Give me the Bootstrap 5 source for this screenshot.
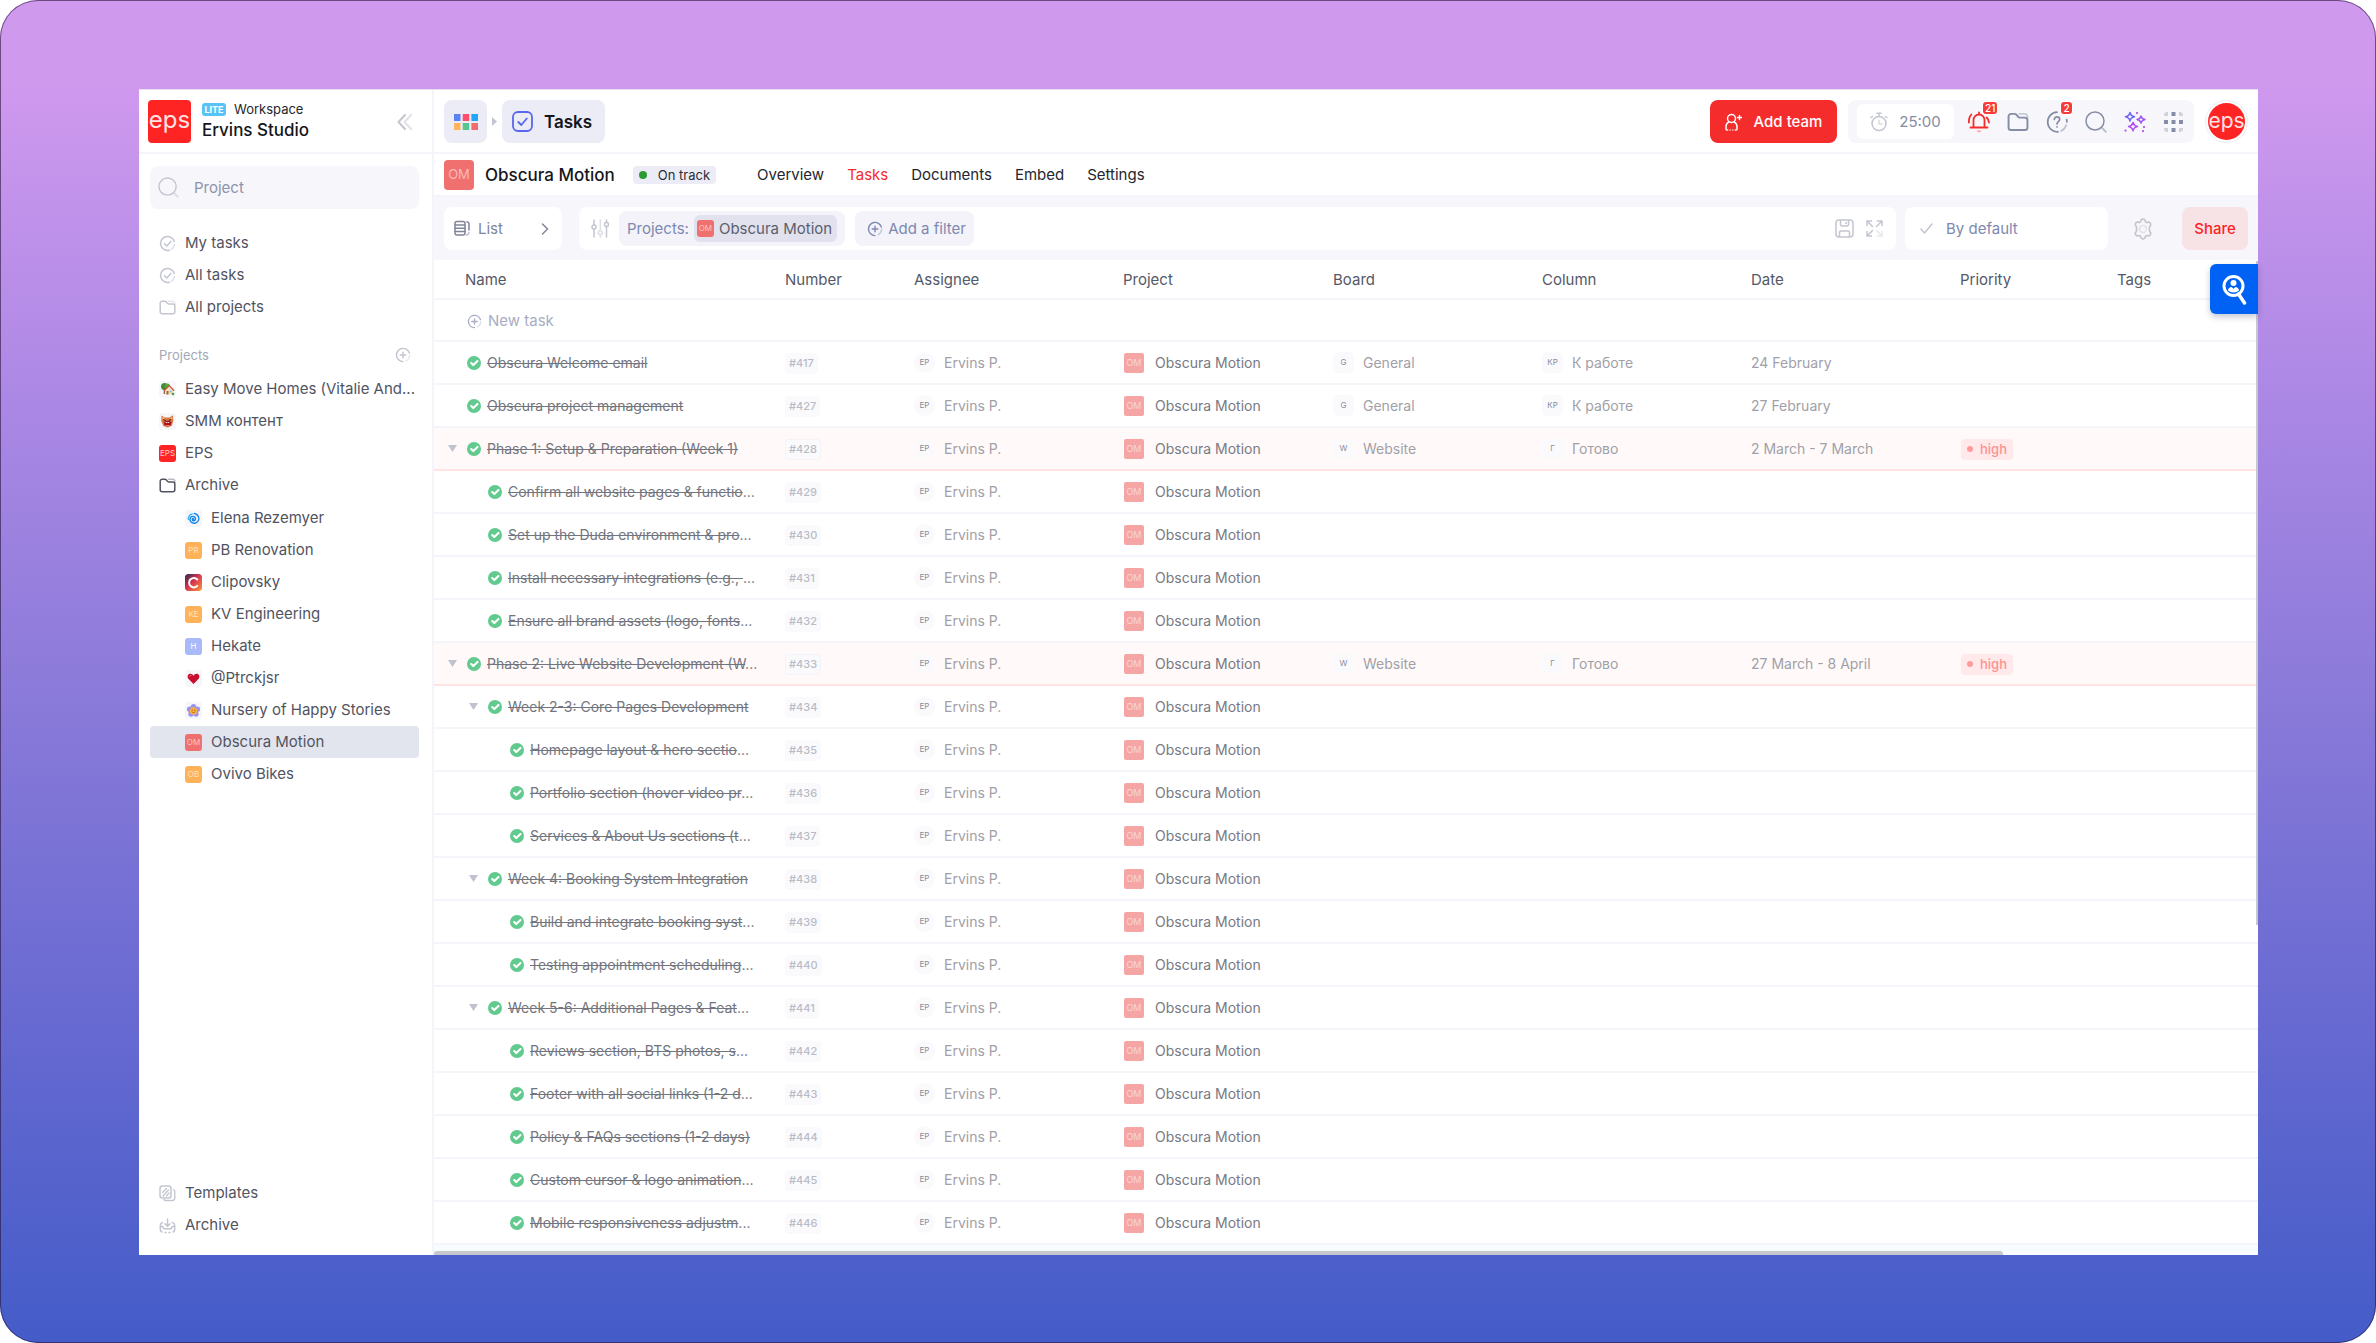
<!DOCTYPE html>
<html lang="en">
<head>
<meta charset="utf-8">
<meta name="viewport" content="width=device-width, initial-scale=1">
<title>Obscura Motion – Tasks</title>
<link href="https://cdn.jsdelivr.net/npm/bootstrap@5.3.0/dist/css/bootstrap.min.css" rel="stylesheet">
<style>
  :root { --line: #f4f5fa; --soft: #f7f7fb; --chip: #ebecf5; --ink: #15161c; --txt: #51545f; --mute: #8d93ab; --slate: #7d89b0; --red: #f52c2c; }
  body { font-family: Inter, "Liberation Sans", sans-serif; font-size: 15px; line-height: 20px; color: var(--txt); background: #fff; }
  a { color: inherit; text-decoration: none; }
  svg { display: block; flex: none; fill: none; stroke: currentColor; stroke-width: 1.5; stroke-linecap: round; stroke-linejoin: round; }
  button { font: inherit; color: inherit; border: 0; background: none; padding: 0; white-space: nowrap; }
  .frame { min-height: 100vh; padding: 89px 118px 88px 139px; border-radius: 38px; box-shadow: inset 0 0 0 1px rgba(40, 20, 60, .6); background: linear-gradient(180deg, #cf99ee 6%, #a886e4 32%, #8a7ad9 52%, #6669d1 77%, #445cc8 100%); }
  .app { background: #fff; border-top: 1px solid #e6e2ef; }
  .topline { height: 64px; padding-top: 1px; border-bottom: 2px solid var(--line); }

  /* sidebar */
  .side { width: 295px; border-right: 2px solid var(--line); }
  .brand { padding-left: 9px; gap: 11px; }
  .eps { background: #ff2424; color: #ffe3e3; line-height: 1; overflow: hidden; }
  .eps-sq { width: 43px; height: 43px; border-radius: 4px; font-size: 24px; padding-bottom: 4px; }
  .eps-av { width: 37px; height: 37px; border-radius: 50%; font-size: 21px; padding-bottom: 3px; }
  .ring { padding: 2px; border: 1px solid #ebecf2; border-radius: 50%; }
  .lite { width: 24px; height: 13px; border-radius: 3px; background: #58c3f6; color: #fff; font-size: 9px; line-height: 13px; font-weight: 700; text-align: center; }
  .ws-small { font-size: 13px; line-height: 17px; color: #25262d; }
  .ws-big { font-size: 17px; line-height: 24px; font-weight: 500; color: var(--ink); }
  .side-body { padding: 12px 13px 14px 11px; }
  .find { height: 43px; border-radius: 8px; background: var(--soft); color: #c3c5cf; padding: 0 8px; gap: 13px; }
  .find input { border: 0; background: none; outline: 0; min-width: 0; color: var(--mute); }
  .find input::placeholder { color: var(--mute); opacity: 1; }
  .nav-main { margin-top: 18px; }
  .nav-proj { margin-top: 2px; }
  .lnk { height: 32px; padding-left: 9px; gap: 9px; border-radius: 4px; white-space: nowrap; }
  .lnk svg.ln { color: #c3c5cf; }
  .lnk.active { background: #e3e5ee; }
  .sub { margin-top: 1px; }
  .sub .lnk { padding-left: 35px; }
  .grp { height: 32px; margin-top: 16px; padding: 0 8px 0 9px; font-size: 13px; color: #a3a7b8; }
  .tile { width: 17px; height: 17px; border-radius: 3px; flex: none; font-size: 8px; line-height: 17px; text-align: center; color: #ffdcc0; background: #f6f6fb; overflow: hidden; }
  .tile svg { width: 17px; height: 17px; stroke: none; }
  .t-org { background: #ffb257; color: #ffe2bd; }
  .t-red { background: #f07070; color: #fcc3c3; }
  .t-eps { background: #ff2424; color: #ffc9c9; }
  .t-blu { background: #a9baf9; color: #fff; }

  /* top bar */
  .bar { padding-left: 10px; padding-right: 10px; }
  .soft-btn { height: 43px; border-radius: 8px; background: var(--chip); color: var(--ink); }
  .soft-btn.sq { width: 43px; }
  .soft-btn.wide { padding: 0 13px 0 10px; gap: 11px; font-size: 17px; font-weight: 600; }
  .sep { width: 15px; color: #c3c5d2; }
  .add-team { height: 43px; width: 127px; gap: 12px; border-radius: 8px; background: var(--red); color: #fff; font-weight: 500; margin-right: 11px; }
  .tools { height: 43px; padding: 0 1px 0 9px; border-radius: 8px; background: var(--soft); margin-right: 11px; color: #858ca6; }
  .timer { height: 35px; width: 97px; border-radius: 6px; background: #fff; margin-right: 5px; gap: 11px; }
  .tool { width: 39px; height: 43px; }
  .pin { position: absolute; top: 2px; left: 24px; min-width: 11px; height: 12px; padding: 0 2px; border-radius: 3px; background: #f73b3b; box-shadow: 0 0 0 1px #fff; color: #fff; font-size: 10px; line-height: 12px; font-weight: 500; }

  /* project bar */
  .proj { height: 43px; border-bottom: 2px solid var(--line); }
  .om { width: 30px; height: 30px; border-radius: 4px; background: #f07070; color: #fbb9b9; font-size: 13px; line-height: 29px; text-align: center; }
  .proj-name { font-size: 17px; font-weight: 500; color: var(--ink); margin: 0 18px 0 11px; line-height: 24px; }
  .track { height: 18px; padding: 0 6px; gap: 11px; border-radius: 4px; background: var(--chip); font-size: 13px; line-height: 18px; color: #2b2d36; }
  .track i { width: 8px; height: 8px; border-radius: 50%; background: #2c9b33; }
  .tabs { margin-left: 41px; gap: 23px; color: #25262d; }
  .tabs .active { color: #f52c2c; }

  /* filter bar */
  .filters { padding: 10px; background: var(--soft); }
  .box { height: 43px; border-radius: 8px; background: #fff; }
  .view { width: 118px; padding: 0 13px 0 10px; margin-right: 17px; color: #80859a; }
  .fbox { padding: 0 13px 0 12px; margin-right: 9px; }
  .pill { height: 35px; padding: 0 8px; border-radius: 8px; background: #f3f3f9; color: var(--slate); margin-left: 10px; gap: 5px; }
  .pill-in { height: 27px; border-radius: 6px; background: #e1e2ee; color: #5b5e6c; padding: 0 5px 0 3px; gap: 5px; }
  .sort { width: 203px; padding-left: 15px; gap: 13px; color: var(--slate); }
  .faint { color: #c3c5cf; }
  .gear { margin: 0 28px 0 24px; }
  .share { width: 66px; height: 43px; border-radius: 8px; background: #f7e2e5; color: #ff1f1f; font-weight: 500; }

  /* task table */
  .tasks { table-layout: fixed; border-collapse: separate; border-spacing: 0; margin: 0; font-size: 14px; width: 100%; }
  .tasks th { height: 40px; padding: 2px 0 0; font-size: 15px; font-weight: 400; color: #555866; border-bottom: 2px solid var(--line); vertical-align: middle; }
  .tasks th:first-child { padding-left: 31px; }
  .tasks td { height: 43px; padding: 0; border-bottom: 2px solid var(--line); color: #9fa0a8; white-space: nowrap; vertical-align: middle; }
  .tasks .new td { height: 42px; padding: 2px 0 0 33px; color: #a7adc3; }
  .new button { font-size: 15px; gap: 6px; }
  .tasks .hot td { background: #fffaf9; border-bottom-color: #ffe2e1; }
  .c-name { width: 351px; } .c-num { width: 129px; } .c-mid { width: 209px; } .c-proj { width: 210px; } .c-pri { width: 157px; }
  .nm { padding-left: 14px; gap: 6px; color: #73757e; }
  .l1 { padding-left: 35px; } .l2 { padding-left: 57px; }
  .tog { width: 13px; color: #c0c3cf; }
  .tog svg { width: 9px; fill: currentColor; stroke: none; }
  .done.form-check-input { width: 14px; height: 14px; margin: 0; border: 0; border-radius: 50%; background-color: #62ca8e; flex: none; }
  .no { display: inline-block; height: 21px; padding: 0 4px; border-radius: 4px; background: #fafafd; font-size: 11px; line-height: 20px; font-weight: 500; color: #b9bbc6; }
  .hot .no { box-shadow: inset 0 0 0 1px #f4f3f8; }
  .av { width: 21px; height: 21px; border-radius: 5px; background: #fafafd; font-size: 8px; line-height: 21px; text-align: center; color: #8a8c96; margin-right: 9px; }
  .av.rd { border-radius: 50%; }
  .pj { width: 20px; height: 20px; margin: 0 11px 0 1px; border-radius: 2px; background: #f6a5a5; font-size: 9px; line-height: 20px; text-align: center; color: #fbd5d5; }
  .pj-name { color: #777983; }
  .hi { display: inline-flex; align-items: center; height: 21px; padding: 0 6px; gap: 7px; margin-left: 1px; border-radius: 4px; background: #ffe9ea; color: #ff9191; font-size: 13px; font-weight: 500; }
  .hi i { width: 6px; height: 6px; border-radius: 50%; background: #ff9a9a; }
  .hscroll { height: 10px; background: #f8fbff; }
  .hscroll div { width: 86%; height: 4px; border-radius: 3px 3px 0 0; background: #c6c8d0; }
  .vscroll { position: absolute; right: 0; top: 171px; width: 2px; height: 57%; background: #c6c8d0; }
  .float { position: absolute; right: 0; top: 174px; width: 48px; height: 50px; border-radius: 6px 0 0 6px; background: #0062f5; color: #fff; box-shadow: 0 3px 6px rgba(30, 40, 80, .25); }
</style>
<script src="https://cdn.jsdelivr.net/npm/bootstrap@5.3.0/dist/js/bootstrap.bundle.min.js"></script>
</head>
<body>
<svg class="d-none" aria-hidden="true">
  <symbol id="i-done" viewBox="0 0 17 17"><path d="M15.3 6.5A7 7 0 1 0 10.5 15.2"/><path d="M15.6 9.5A7 7 0 0 1 12.5 14.2" opacity=".5"/><path d="M5.5 8.8l2.2 2.2 4.2-4.6"/></symbol>
  <symbol id="i-folder" viewBox="0 0 17 17"><path d="M1.2 4.2a2 2 0 0 1 2-2h2.6c.6 0 1.1.3 1.5.7l1.2 1.5c.4.5.9.7 1.5.7h3.8a2 2 0 0 1 2 2v5.600a2 2 0 0 1-2 2H3.200a2 2 0 0 1-2-2z"/><path d="M9.500 2.200h4.300a2 2 0 0 1 2 2v1.200" opacity=".4"/></symbol>
  <symbol id="i-plus" viewBox="0 0 17 17"><path d="M15.300 6.500A7 7 0 1 0 8.500 15.500"/><path d="M15.500 9a7 7 0 0 1-3.700 5.700" opacity=".4"/><path d="M8.500 5.500v6M5.500 8.500h6"/></symbol>
  <symbol id="i-search" viewBox="0 0 22 22"><circle cx="10" cy="10" r="9"/><path d="M17.500 17.500l3.300 3.300" opacity=".5" stroke-width="2"/></symbol>
</svg>

<div class="frame d-flex">
<div class="app position-relative d-flex flex-grow-1">

  <aside class="side d-flex flex-column flex-shrink-0">
    <div class="topline brand d-flex align-items-center pe-3">
      <div class="eps eps-sq d-flex align-items-center justify-content-center">eps</div>
      <div>
        <div class="d-flex align-items-center gap-2"><span class="lite">LITE</span><span class="ws-small">Workspace</span></div>
        <div class="ws-big">Ervins Studio</div>
      </div>
      <button class="ms-auto me-1" aria-label="Collapse sidebar"><svg class="faint" width="15" height="18" viewBox="0 0 15 18" stroke-width="2"><path d="M8 2L1.500 9 8 16" stroke-width="2"/><path d="M14 2L7.500 9l6.500 7" opacity=".5" stroke-width="2"/></svg></button>
    </div>
    <div class="side-body d-flex flex-column flex-grow-1">
      <label class="find d-flex align-items-center"><svg width="21" height="21"><use href="#i-search"/></svg><input type="text" placeholder="Project" aria-label="Project"></label>
      <ul class="nav-main list-unstyled mb-0">
        <li><a href="#" class="lnk d-flex align-items-center"><svg class="ln" width="17" height="17"><use href="#i-done"/></svg>My tasks</a></li>
        <li><a href="#" class="lnk d-flex align-items-center"><svg class="ln" width="17" height="17"><use href="#i-done"/></svg>All tasks</a></li>
        <li><a href="#" class="lnk d-flex align-items-center"><svg class="ln" width="17" height="17"><use href="#i-folder"/></svg>All projects</a></li>
      </ul>
      <div class="grp d-flex align-items-center justify-content-between">Projects<button class="faint" aria-label="Add project"><svg width="16" height="16"><use href="#i-plus"/></svg></button></div>
      <ul class="nav-proj list-unstyled mb-0">
        <li><a href="#" class="lnk d-flex align-items-center"><span class="tile"><svg viewBox="0 0 17 17"><circle cx="5.500" cy="5.500" r="3.500" fill="#3f8f35"/><circle cx="8.500" cy="5" r="2.500" fill="#56a843"/><path d="M4.700 7.500h1.200V13H4.700z" fill="#8a5a34"/><path d="M6 9l4.300-4 4.200 4v4.500H6z" fill="#f5e2c2"/><path d="M5.500 9.200l4.700-4.600 4.500 4.600" stroke="#c5553c" stroke-width="1.300" fill="none"/><path d="M7.500 10h2v3.500h-2z" fill="#a0653b"/><path d="M10.800 9.700h1.700v1.700h-1.700z" fill="#6cb7e8"/><circle cx="14" cy="13" r="1.300" fill="#4aa03f"/></svg></span>Easy Move Homes (Vitalie And...</a></li>
        <li><a href="#" class="lnk d-flex align-items-center"><span class="tile"><svg viewBox="0 0 17 17"><path d="M2.500 2.500l3 2h5l3.500-2.300.3 5.500-1.500 5-4.200 1.800-4.300-1.500L2.300 8z" fill="#d9793f"/><path d="M3.500 4l2 1.500L3.700 7zM13.300 3.800l-2 1.700L13 7z" fill="#f8c9a0"/><path d="M5 9.500c1-2 6-2.400 7.300-.2l-.6 3-3.500 1-2.700-1z" fill="#a5121c"/><path d="M6.300 9l1 1 1-.8 1.200.8 1-1z" fill="#fff"/><path d="M4.500 6.800l2 .7M12 6.500l-2 .8" stroke="#4b1d12" stroke-width="1"/><path d="M7 12.500h3" stroke="#ff6b6b" stroke-width="1.200"/></svg></span>SMM контент</a></li>
        <li><a href="#" class="lnk d-flex align-items-center"><span class="tile t-eps">EPS</span>EPS</a></li>
        <li><a href="#" class="lnk d-flex align-items-center"><svg width="17" height="17"><use href="#i-folder"/></svg>Archive</a>
          <ul class="sub list-unstyled">
            <li><a href="#" class="lnk d-flex align-items-center"><span class="tile"><svg viewBox="0 0 17 17"><g fill="none" stroke-linecap="round"><path d="M8.600 9.200c.3-1-1.400-1-1.300.4.100 1.900 3.400 1.500 3.200-1-.3-3-5.300-3-5.500.6-.1 2.600 2 4.300 4.500 4 2.800-.4 4.600-2.700 4.300-5.200C13.500 5.500 11.500 4 9.200 3.500" stroke="#1585ea" stroke-width="1.400"/><path d="M3.300 9.500c-.1-3 1.700-5 4-5.600" stroke="#35b4f2" stroke-width="1.300"/></g></svg></span>Elena Rezemyer</a></li>
            <li><a href="#" class="lnk d-flex align-items-center"><span class="tile t-org">PR</span>PB Renovation</a></li>
            <li><a href="#" class="lnk d-flex align-items-center"><span class="tile"><svg viewBox="0 0 17 17"><defs><linearGradient id="gc" x1="0" y1="0" x2="1" y2="1"><stop offset="0" stop-color="#1f2b50"/><stop offset=".45" stop-color="#d8324f"/><stop offset="1" stop-color="#fb9a3c"/></linearGradient></defs><rect width="17" height="17" rx="3" fill="url(#gc)"/><path d="M12.300 5.500a4.700 4.700 0 1 0 0 6.400" fill="none" stroke="#fff" stroke-width="2"/></svg></span>Clipovsky</a></li>
            <li><a href="#" class="lnk d-flex align-items-center"><span class="tile t-org">KE</span>KV Engineering</a></li>
            <li><a href="#" class="lnk d-flex align-items-center"><span class="tile t-blu">H</span>Hekate</a></li>
            <li><a href="#" class="lnk d-flex align-items-center"><span class="tile"><svg viewBox="0 0 17 17"><path d="M8.500 14L3.300 8.700C1.700 6.500 3 3.800 5.300 3.800c1.400 0 2.600.9 3.200 2 .6-1.100 1.800-2 3.200-2 2.300 0 3.600 2.700 2 4.900z" fill="#c8102e"/><path d="M4.800 6.300c.2-.7.700-1 1.300-1" stroke="#ff7b8a" stroke-width="1" fill="none"/></svg></span>@Ptrckjsr</a></li>
            <li><a href="#" class="lnk d-flex align-items-center"><span class="tile"><svg viewBox="0 0 17 17"><g fill="#9a94f0"><circle cx="8.500" cy="4.600" r="2.700"/><circle cx="12.400" cy="7.300" r="2.700"/><circle cx="11" cy="12" r="2.700"/><circle cx="6" cy="12" r="2.700"/><circle cx="4.600" cy="7.300" r="2.700"/></g><circle cx="8.500" cy="8.900" r="3.600" fill="#fdb03f"/><path d="M7.200 7.700v.8M9.800 7.700v.8M7 10c.8.900 2.200.9 3 0" stroke="#a85a10" stroke-width=".8" fill="none"/></svg></span>Nursery of Happy Stories</a></li>
            <li><a href="#" class="lnk active d-flex align-items-center" aria-current="page"><span class="tile t-red">OM</span>Obscura Motion</a></li>
            <li><a href="#" class="lnk d-flex align-items-center"><span class="tile t-org">OB</span>Ovivo Bikes</a></li>
          </ul>
        </li>
      </ul>
      <ul class="list-unstyled mb-0 mt-auto">
        <li><a href="#" class="lnk d-flex align-items-center"><svg class="ln" width="17" height="17" viewBox="0 0 17 17"><rect x="1" y="1" width="11" height="12" rx="2.500"/><path d="M14.500 4.500c1 .4 1.300 1 1.300 2V13a2.500 2.500 0 0 1-2.500 2.500H7c-1 0-1.700-.3-2.200-1M3.500 7.500l4-4M4 11l5.500-6M7.500 11L10 8" stroke-width="1.300"/></svg>Templates</a></li>
        <li><a href="#" class="lnk d-flex align-items-center"><svg class="ln" width="17" height="17" viewBox="0 0 17 17"><path d="M8.500 2v7M6 6.700L8.500 9.200 11 6.700"/><path d="M3.500 5.500C2 6 1.300 7 1.300 8.500v4c0 1 .5 2 1.500 2.500M13.500 5.500c1.500.5 2.200 1.500 2.200 3v4c0 1-.5 2-1.500 2.500M1.500 9.500h2l1.500 2.300h7l1.500-2.300h2M6 15.500h1M10 15.500h1"/></svg>Archive</a></li>
      </ul>
    </div>
  </aside>

  <main class="d-flex flex-column flex-grow-1">
    <header class="topline bar d-flex align-items-center">
      <button class="soft-btn sq d-flex align-items-center justify-content-center" aria-label="Apps"><svg width="24" height="16" viewBox="0 0 24 16"><g stroke="none"><path fill="#5b82f2" d="M0 0h6.500v7H0z"/><path fill="#ff4d6d" d="M8.700 0h6.500v7H8.700z"/><path fill="#22a6f7" d="M17.400 0h6.600v7h-6.600z"/><path fill="#ffb55c" d="M0 9h6.500v7H0z"/><path fill="#5ac58f" d="M8.700 9h6.500v7H8.700z"/><path fill="#ee6e6e" d="M17.400 9h6.600v7h-6.600z"/></g></svg></button>
      <span class="sep d-flex justify-content-center"><svg width="5" height="9" viewBox="0 0 5 9"><path d="M0 0l5 4.500L0 9z" fill="currentColor" stroke="none"/></svg></span>
      <button class="soft-btn wide d-flex align-items-center"><svg width="21" height="21" viewBox="0 0 21 21" color="#5866f0"><g stroke-width="1.800"><rect x="1" y="1" width="19" height="19" rx="5"/><path d="M6.300 11l3 3 5.500-6.500"/></g></svg>Tasks</button>

      <button class="add-team d-flex align-items-center justify-content-center ms-auto"><svg width="17" height="18" viewBox="0 0 17 18"><circle cx="6.500" cy="5.500" r="4"/><path d="M3.800 8.800C2 9.800 1 11.500 1 13.500V16c0 .6.400 1 1 1h.7M9.200 8.800c1.800 1 2.800 2.700 2.800 4.700V16c0 .6-.4 1-1 1h-.7M14.500 2.500v4M12.500 4.500h4"/><path d="M5 17h.5M7.500 17H8" opacity=".6"/></svg>Add team</button>
      <div class="tools d-flex align-items-center">
        <button class="timer d-flex align-items-center justify-content-center"><svg class="faint" width="18" height="20" viewBox="0 0 18 20"><circle cx="9" cy="11.500" r="7"/><path d="M7 1.200h4M9 1.500V4M2.500 4.500L1 5.500M15.500 4.500l1.500 1"/><path d="M9 8.500v3.500h3" opacity=".6"/></svg>25:00</button>
        <button class="tool position-relative d-flex align-items-center justify-content-center" aria-label="Notifications"><svg width="22" height="22" viewBox="0 0 22 22" color="#f52c2c"><path stroke-width="1.800" d="M11 1.500v1.300M5.500 16.500V9a5.500 5.500 0 0 1 11 0v7.500M2.500 16.500h17M3.300 3.500A9 9 0 0 0 .9 9.500v2M18.700 6.500c1.300 1.300 2.200 3 2.300 5"/><path d="M8.500 19.500h5c-.5 1.200-1.400 1.800-2.500 1.800s-2-.6-2.500-1.800z" fill="#fba3a3" stroke="none"/></svg><span class="pin">21</span></button>
        <button class="tool d-flex align-items-center justify-content-center" aria-label="Files"><svg width="22" height="22"><use href="#i-folder"/></svg></button>
        <button class="tool position-relative d-flex align-items-center justify-content-center" aria-label="Help"><svg width="22" height="22" viewBox="0 0 22 22"><g stroke-width="1.700"><path d="M11 1.200a9.800 9.800 0 1 0 1 19.600"/><path d="M15 20a9.800 9.800 0 0 0 5.300-6" opacity=".5"/><path d="M20.700 8.500c.2.800.2 2 .1 2.500M8.300 8.500c0-1.700 1.200-2.700 2.700-2.700s2.700 1 2.700 2.500c0 2.200-2.700 2.300-2.700 4.700M11 15.800v.1"/></g></svg><span class="pin">2</span></button>
        <button class="tool d-flex align-items-center justify-content-center" aria-label="Search"><svg width="22" height="22"><use href="#i-search"/></svg></button>
        <button class="tool d-flex align-items-center justify-content-center" aria-label="AI assistant"><svg width="22" height="22" viewBox="0 0 22 22"><path color="#6a66f5" d="M6 1.500c.5 2.700 1.500 3.700 4.500 4.300-3 .6-4 1.600-4.500 4.300-.5-2.700-1.500-3.700-4.500-4.300 3-.6 4-1.600 4.500-4.300z"/><path color="#a457f0" d="M17 5c.5 2.200 1.400 3 4 3.500-2.600.5-3.500 1.300-4 3.500-.5-2.200-1.400-3-4-3.500 2.600-.5 3.500-1.300 4-3.500z"/><path color="#b14df0" d="M9 11.500c.6 2.600 1.600 3.500 4.500 4-2.900.6-3.900 1.500-4.500 4.300-.6-2.800-1.600-3.700-4.500-4.300 2.900-.5 3.900-1.400 4.500-4z"/><path d="M13 2v.1M1.500 19.500v.1M20 16v.1M19 20v.1" color="#b14df0" stroke-width="2.200"/></svg></button>
        <button class="tool d-flex align-items-center justify-content-center" aria-label="More apps"><svg width="19" height="20" viewBox="0 0 19 20"><g fill="currentColor" stroke="none"><path d="M7.500 0h4v4h-4zM0 8h4v4H0zM7.500 8h4v4h-4zM15 8h4v4h-4zM7.500 16h4v4h-4z"/><path opacity=".35" d="M2 0h2v4H0V2zM15 0h2l2 2v2h-4zM0 16h4v4H2l-2-2zM15 16h4v2l-2 2h-2z"/></g></svg></button>
      </div>
      <a href="#" class="ring" aria-label="Profile"><span class="eps eps-av d-flex align-items-center justify-content-center">eps</span></a>
    </header>

    <div class="proj bar d-flex align-items-center">
      <div class="om">OM</div>
      <h1 class="proj-name">Obscura Motion</h1>
      <span class="track d-flex align-items-center"><i></i>On track</span>
      <nav class="tabs d-flex"><a href="#">Overview</a><a href="#" class="active">Tasks</a><a href="#">Documents</a><a href="#">Embed</a><a href="#">Settings</a></nav>
    </div>

    <div class="filters d-flex align-items-center">
      <button class="box view d-flex align-items-center"><svg width="16" height="17" viewBox="0 0 16 17"><rect x="1" y="1.500" width="10" height="13.500" rx="2"/><path d="M1 5h10M1 8.300h10M1 11.600h10M13 1.800c1.500.3 2 1 2 2.200v6"/><path d="M15 12.500c-.2 1.700-1 2.400-2.500 2.500" opacity=".5"/></svg><span class="ms-2">List</span><svg class="ms-auto" width="8" height="12" viewBox="0 0 8 12"><path d="M1.500 1l5 5-5 5"/></svg></button>
      <div class="box fbox d-flex align-items-center flex-grow-1">
        <svg class="faint" width="18" height="19" viewBox="0 0 18 19"><path d="M3 1v5M3 10v8M15.500 1v2.500M15.500 7.500V18"/><circle cx="3" cy="8" r="2"/><circle cx="15.500" cy="5.500" r="2"/><g opacity=".55"><path d="M9.300 1v10.500M9.300 16v2"/><circle cx="9.300" cy="13.700" r="2"/></g></svg>
        <button class="pill d-flex align-items-center">Projects:<span class="pill-in d-flex align-items-center"><span class="tile t-red">OM</span>Obscura Motion</span></button>
        <button class="pill d-flex align-items-center"><svg class="ms-1" width="16" height="16"><use href="#i-plus"/></svg>Add a filter</button>
        <button class="faint ms-auto" aria-label="Save"><svg width="19" height="19" viewBox="0 0 19 19"><rect x="1" y="1" width="17" height="17" rx="3"/><path d="M5.500 1.500v4a1.500 1.500 0 0 0 1.500 1.500h5a1.500 1.500 0 0 0 1.500-1.500v-4M11 3.500v1M4.500 17.500v-4A1.500 1.500 0 0 1 6 12h7a1.500 1.500 0 0 1 1.500 1.500v4"/></svg></button>
        <button class="faint ms-2 ps-1" aria-label="Expand"><svg width="17" height="17" viewBox="0 0 17 17"><path d="M1 5.500V1h4.500M1.500 1.500l5 5M11.500 1H16v4.500M15.500 1.500l-5 5M1 11.500V16h4.500M1.500 15.500l5-5"/><path opacity=".4" d="M11.500 16H16v-4.500M15.500 15.500l-5-5"/></svg></button>
      </div>
      <button class="box sort d-flex align-items-center"><svg class="faint" width="13" height="11" viewBox="0 0 13 11"><path d="M1 6l3.500 4L12 1"/></svg>By default</button>
      <button class="faint gear" aria-label="Settings"><svg width="22" height="22" viewBox="0 0 22 22"><path stroke-width="1.700" d="M11 1.200c1.300 0 2 .5 2.200 1.600.2 1.200 1.500 1.900 2.700 1.400 1.100-.4 1.900 0 2.500 1.100s.6 2-.3 2.700c-1 .8-1 5.200 0 6 .9.700.9 1.600.3 2.700s-1.400 1.500-2.500 1.100c-1.200-.5-2.500.2-2.700 1.400-.2 1.100-.9 1.600-2.200 1.600s-2-.5-2.200-1.600c-.2-1.200-1.500-1.900-2.700-1.400-1.100.4-1.900 0-2.500-1.100s-.6-2 .3-2.700c1-.8 1-5.200 0-6-.9-.7-.9-1.600-.3-2.700s1.400-1.500 2.500-1.100c1.200.5 2.500-.2 2.700-1.400.2-1.100.9-1.600 2.200-1.600z"/><path d="M13 13.800A3.500 3.500 0 1 1 14.300 12" opacity=".45"/></svg></button>
      <button class="share">Share</button>
    </div>

    <table class="tasks">
      <colgroup><col class="c-name"><col class="c-num"><col class="c-mid"><col class="c-proj"><col class="c-mid"><col class="c-mid"><col class="c-mid"><col class="c-pri"><col></colgroup>
      <thead><tr><th>Name</th><th>Number</th><th>Assignee</th><th>Project</th><th>Board</th><th>Column</th><th>Date</th><th>Priority</th><th>Tags</th></tr></thead>
      <tbody id="rows">
        <tr class="new"><td colspan="9"><button class="d-flex align-items-center"><svg width="15" height="15"><use href="#i-plus"/></svg>New task</button></td></tr>
      </tbody>
    </table>
    <div class="hscroll mt-auto d-flex align-items-end"><div></div></div>
  </main>

  <div class="vscroll"></div>
  <button class="float d-flex align-items-center justify-content-center" aria-label="Find people"><svg width="25" height="31" viewBox="0 0 25 31"><circle cx="11.500" cy="12" r="9.500" stroke-width="3"/><path d="M16.500 20l6 9" stroke-width="3.500"/><g fill="#fff" stroke="none"><circle cx="11.500" cy="9" r="3"/><path d="M6 16.500c0-2 2-3.500 3.500-3.500l2 1.700 2-1.700c1.500 0 3.500 1.500 3.500 3.500-2.500 2.500-8.500 2.500-11 0z"/></g></svg></button>
</div>
</div>

<script>
  // [level, has children, name, number, board, column, date, priority]
  const tasks = [
    [0, 0, 'Obscura Welcome email', 417, 'General', 'К работе', '24 February'],
    [0, 0, 'Obscura project management', 427, 'General', 'К работе', '27 February'],
    [0, 1, 'Phase 1: Setup & Preparation (Week 1)', 428, 'Website', 'Готово', '2 March - 7 March', 'high'],
    [1, 0, 'Confirm all website pages & functio...', 429],
    [1, 0, 'Set up the Duda environment & pro...', 430],
    [1, 0, 'Install necessary integrations (e.g., ...', 431],
    [1, 0, 'Ensure all brand assets (logo, fonts...', 432],
    [0, 1, 'Phase 2: Live Website Development (W...', 433, 'Website', 'Готово', '27 March - 8 April', 'high'],
    [1, 1, 'Week 2-3: Core Pages Development', 434],
    [2, 0, 'Homepage layout & hero sectio...', 435],
    [2, 0, 'Portfolio section (hover video pr...', 436],
    [2, 0, 'Services & About Us sections (t...', 437],
    [1, 1, 'Week 4: Booking System Integration', 438],
    [2, 0, 'Build and integrate booking syst...', 439],
    [2, 0, 'Testing appointment scheduling...', 440],
    [1, 1, 'Week 5-6: Additional Pages & Feat...', 441],
    [2, 0, 'Reviews section, BTS photos, s...', 442],
    [2, 0, 'Footer with all social links (1-2 d...', 443],
    [2, 0, 'Policy & FAQs sections (1-2 days)', 444],
    [2, 0, 'Custom cursor & logo animation...', 445],
    [2, 0, 'Mobile responsiveness adjustm...', 446]
  ];
  const short = { 'General': 'G', 'Website': 'W', 'К работе': 'КР', 'Готово': 'Г' };
  const esc = s => s.replace(/&/g, '&amp;');
  const ref = v => v ? `<div class="d-flex align-items-center"><span class="av">${short[v]}</span>${v}</div>` : '';
  const arrow = '<button class="tog" aria-label="Toggle subtasks"><svg height="7" viewBox="0 0 9 7"><path d="M0 0h9L4.500 7z"/></svg></button>';
  document.getElementById('rows').insertAdjacentHTML('beforeend', tasks.map(([lvl, kids, name, no, board, col, date, pri]) => {
    const cut = name.endsWith('...');
    const text = esc(cut ? name.slice(0, -3) : name);
    return `<tr class="${pri ? 'hot' : ''}">
      <td><div class="nm l${lvl} d-flex align-items-center">${kids ? arrow : '<span class="tog"></span>'}<input class="done form-check-input" type="checkbox" checked aria-label="${esc(name)}"><span><s>${text}</s>${cut ? '...' : ''}</span></div></td>
      <td><span class="no">#${no}</span></td>
      <td><div class="d-flex align-items-center"><span class="av rd">EP</span>Ervins P.</div></td>
      <td><div class="d-flex align-items-center"><span class="pj">OM</span><span class="pj-name">Obscura Motion</span></div></td>
      <td>${ref(board)}</td><td>${ref(col)}</td><td>${date || ''}</td>
      <td>${pri ? `<span class="hi"><i></i>${pri}</span>` : ''}</td><td></td></tr>`;
  }).join(''));
</script>
</body>
</html>
